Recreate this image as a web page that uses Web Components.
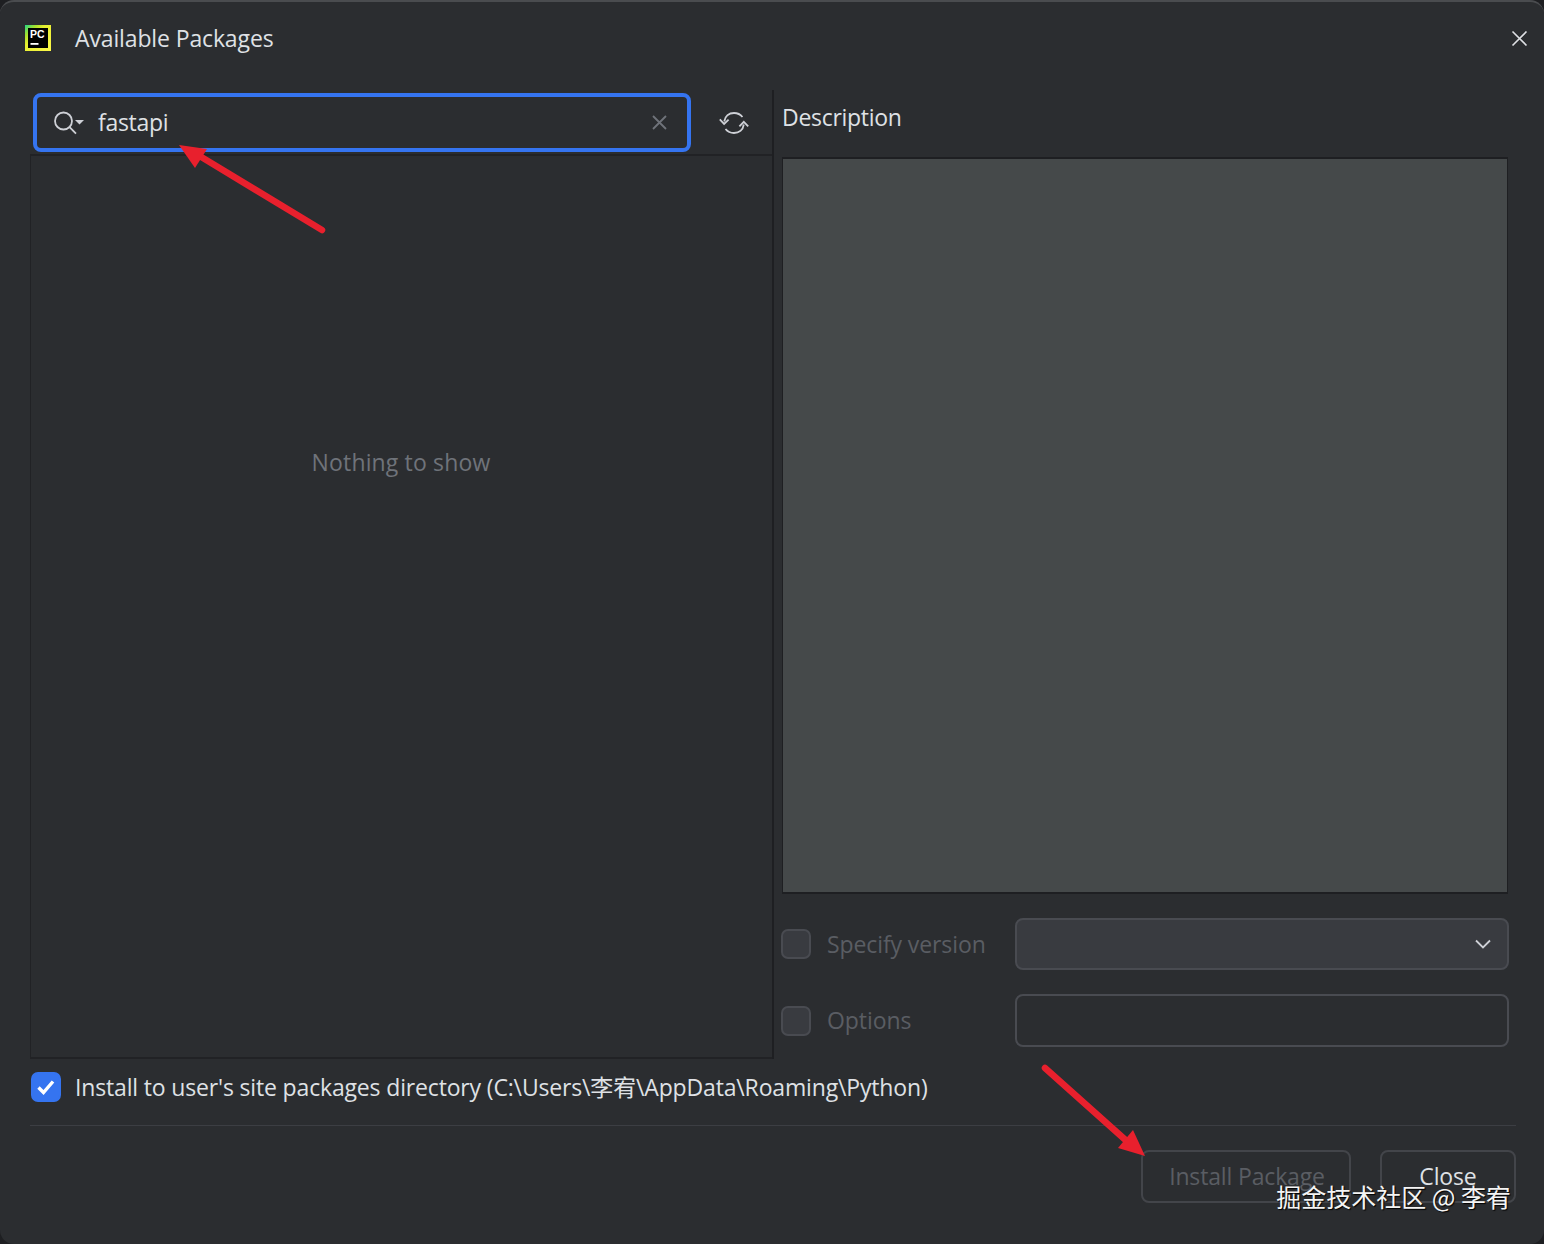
<!DOCTYPE html>
<html lang="en"><head><meta charset="utf-8"><title>Available Packages</title>
<style>
html,body{margin:0;padding:0;background:#1e1f22;}
body{font-family:"Open Sans","Noto Sans CJK SC",sans-serif;font-size:23px;}
</style></head><body>
<packages-dialog></packages-dialog>
<script>
function def(name, css, html){
  customElements.define(name, class extends HTMLElement{
    constructor(){super();const r=this.attachShadow({mode:'open'});
      r.innerHTML='<style>'+css+'</style>'+html;}
  });
}
const FONT='"Open Sans","Noto Sans CJK SC",sans-serif';

def('title-bar',`
:host{display:flex;align-items:center;height:72px;padding:0 16px 0 25px;color:#dfe1e5;font:23px/1 ${FONT};}
svg{display:block;flex:none}
.t{margin-left:24px;flex:1;letter-spacing:-.13px}
`,`<svg width="26" height="26" viewBox="0 0 26 26" aria-hidden="true">
<defs><linearGradient id="g" x1="0" y1="0" x2="1" y2="1"><stop offset="0" stop-color="#21d789"/><stop offset=".22" stop-color="#a8e02c"/><stop offset=".4" stop-color="#e6ee30"/><stop offset="1" stop-color="#fcf84a"/></linearGradient></defs>
<rect width="26" height="26" fill="url(#g)"/><rect x="3" y="3" width="20" height="20" fill="#000"/>
<text x="5" y="13" font-family="Liberation Sans" font-weight="700" font-size="10.500" fill="#fff">PC</text>
<rect x="5.500" y="18" width="8" height="1.800" fill="#fff"/></svg>
<span class="t"><slot></slot></span>
<svg width="17" height="17" viewBox="0 0 17 17" aria-hidden="true"><path d="M1.500 1.500l14 14M15.500 1.500l-14 14" stroke="#dfe1e5" stroke-width="1.600" fill="none"/></svg>`);

def('search-field',`
:host{display:flex;align-items:center;box-sizing:border-box;width:658px;height:59px;border:4px solid #3574f0;border-radius:8px;padding:0 20px 0 15px;color:#dfe1e5;font:23px/1 ${FONT};}
svg{display:block;flex:none}
.t{flex:1;margin-left:13px;letter-spacing:-.3px}
`,`<svg width="33" height="30" viewBox="0 0 33 30" aria-hidden="true"><circle cx="11.500" cy="13" r="8.500" stroke="#ced0d6" stroke-width="1.800" fill="none"/><path d="M17.600 19.200l6.400 6.400" stroke="#ced0d6" stroke-width="1.800"/><path d="M23 12h9l-4.500 4.600z" fill="#ced0d6"/></svg>
<span class="t"><slot></slot></span>
<svg width="15" height="15" viewBox="0 0 15 15" aria-hidden="true"><path d="M1 1l13 13M14 1L1 14" stroke="#6f737a" stroke-width="1.800" fill="none"/></svg>`);

def('refresh-icon',`:host{display:block;width:32px;height:32px}svg{display:block}`,
`<svg width="32" height="32" viewBox="0 0 32 32" aria-hidden="true" fill="none" stroke="#ced0d6" stroke-width="1.800">
<path d="M6.200 14.500C7 9 11 6 16 6c3.600 0 6.500 1.500 8.500 4"/><path d="M1.800 12.300l4.300 4.600 4.500-4.300"/>
<path d="M25.800 17.500C25 23 21 26 16 26c-3.600 0-6.500-1.500-8.500-4"/><path d="M21.400 19.400l4.400-4.600 4.400 4.500"/></svg>`);

def('left-pane',`
:host{display:flex;flex-direction:column;width:744px;box-sizing:border-box;border-right:2px solid #1e1f22;}
.h{display:flex;align-items:center;height:64px;box-sizing:border-box;padding:3px 0 2px 3px;gap:27px}
.l{flex:1;border:solid #212225;border-width:2px 0 2px 1px;display:flex;justify-content:center;padding:288px 2px 0 1px;box-sizing:border-box;color:#6f737a;font:23px/36px ${FONT};letter-spacing:.15px}
`,`<div class="h"><slot name="head"></slot></div><div class="l"><slot></slot></div>`);

def('right-pane',`
:host{display:flex;flex-direction:column;width:726px;color:#dfe1e5;font:23px/1 ${FONT};}
.h{height:67px;display:flex;align-items:center;padding:0 0 12px 0;box-sizing:border-box;letter-spacing:-.3px}
.d{height:737px;box-sizing:border-box;background:#45494a;border:solid #1e1f22;border-width:2px 1px 2px 1px}
.f{display:flex;flex-direction:column;gap:24px;margin-top:24px}
`,`<div class="h"><slot name="head"></slot></div><div class="d"></div><div class="f"><slot></slot></div>`);

def('form-row',`
:host{display:grid;grid-template-columns:234px 494px;align-items:center;margin-left:-1px;color:#5a5d63;font:23px/1 ${FONT};}
`,`<slot></slot>`);

def('ide-check',`
:host{display:inline-flex;align-items:center;gap:16px;font:23px/1 ${FONT};letter-spacing:-.1px}
.b{flex:none;box-sizing:border-box;width:30px;height:30px;border-radius:7px;background:#393b40;border:2px solid #494b51;display:flex;align-items:center;justify-content:center}
:host([checked]) .b{background:#3574f0;border-color:#3574f0}
svg{display:none}:host([checked]) svg{display:block}
:host([checked]){gap:14px;color:#dfe1e5;margin-left:1px;letter-spacing:-.16px}
`,`<span class="b"><svg width="22" height="22" viewBox="0 0 22 22" aria-hidden="true"><path d="M3.500 11.500l5 5L18 5.500" stroke="#fff" stroke-width="3.400" fill="none"/></svg></span><span><slot></slot></span>`);

def('ide-field',`
:host{display:flex;align-items:center;justify-content:flex-end;box-sizing:border-box;height:52px;border:2px solid #494b51;border-radius:8px;padding-right:16px}
:host([combo]){background:#393b40}
:host(:not([combo])){height:53px}
svg{display:none}:host([combo]) svg{display:block}
`,`<svg width="16" height="10" viewBox="0 0 16 10" aria-hidden="true"><path d="M1 1.500l7 7 7-7" stroke="#ced0d6" stroke-width="1.800" fill="none"/></svg>`);

def('ide-button',`
:host{display:flex;flex:none;align-items:center;justify-content:center;box-sizing:border-box;height:53px;border:2px solid #43454a;border-radius:8px;color:#dfe1e5;font:23px/1 ${FONT};letter-spacing:-.15px}
:host([disabled]){color:#5a5d63;padding-left:2px}
`,`<slot></slot>`);

def('anno-arrow',`
:host{position:absolute;display:block;pointer-events:none}
svg{display:block;overflow:visible}
`,`<svg width="100%" height="100%"><line id="l" stroke="#e8202d" stroke-width="6.500" stroke-linecap="round"/><polygon id="p" fill="#e8202d"/></svg>`);

def('packages-dialog',`
:host{display:block;position:relative;width:1544px;height:1244px;box-sizing:border-box;background:#2b2d30;border-radius:14px;border-top:2px solid #4a4c4f;overflow:hidden;color:#dfe1e5;font:23px/1 ${FONT}}
.main{display:flex;gap:8px;margin:16px 0 0 30px;height:969px}
.foot{margin:13px 28px 0 30px}
.sep{height:1px;background:#3c3e43;margin-top:23px}
.btns{display:flex;justify-content:flex-end;gap:29px;margin-top:24px}
.wm{position:absolute;right:33px;top:1179px;color:#f4f4f4;font:25px/1.2 "Noto Sans CJK SC","Noto Sans",sans-serif;text-shadow:1px 1px 1px #000;white-space:nowrap}
.a1{left:0;top:-2px;width:100%;height:100%}
`,`<title-bar>Available Packages</title-bar>
<div class="main">
<left-pane><search-field slot="head">fastapi</search-field><refresh-icon slot="head"></refresh-icon>Nothing to show</left-pane>
<right-pane><span slot="head">Description</span>
<form-row><ide-check>Specify version</ide-check><ide-field combo></ide-field></form-row>
<form-row><ide-check style="letter-spacing:-.05px">Options</ide-check><ide-field></ide-field></form-row>
</right-pane></div>
<div class="foot"><ide-check checked>Install to user's site packages directory (C:\\Users\\李宥\\AppData\\Roaming\\Python)</ide-check>
<div class="sep"></div>
<div class="btns"><ide-button disabled style="width:210px">Install Package</ide-button><ide-button style="width:136px">Close</ide-button></div></div>
<anno-arrow class="a1" id="a1"></anno-arrow><anno-arrow class="a1" id="a2"></anno-arrow>
<div class="wm">掘金技术社区 @ 李宥</div>`);

const d=document.querySelector('packages-dialog').shadowRoot;
function arrow(id,x1,y1,xn,yn,pts){const r=d.getElementById(id).shadowRoot,l=r.getElementById('l');
 l.setAttribute('x1',x1);l.setAttribute('y1',y1);l.setAttribute('x2',xn);l.setAttribute('y2',yn);
 r.getElementById('p').setAttribute('points',pts);}
arrow('a1',322,230,198,155,'179,145 207,149 195,168');
arrow('a2',1045,1068,1130,1144,'1145,1156 1118,1148 1133,1130');
</script></body></html>
